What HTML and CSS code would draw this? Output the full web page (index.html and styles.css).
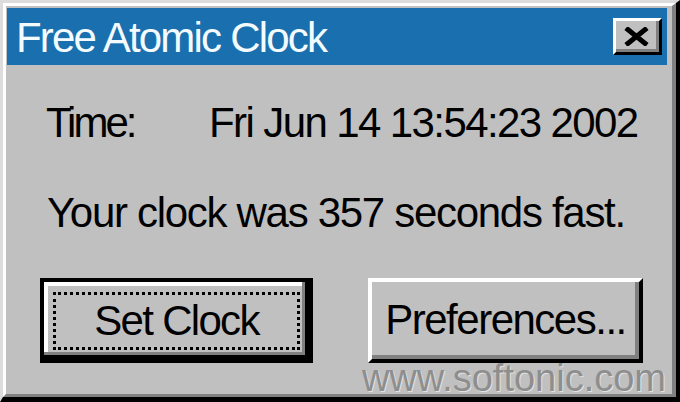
FILE: index.html
```html
<!DOCTYPE html>
<html lang="en">
<head>
<meta charset="utf-8">
<title>Free Atomic Clock</title>
<link rel="stylesheet" href="styles.css">
</head>
<body>
<div class="window">
  <div class="frame">
    <div class="titlebar">
      <span class="title">Free Atomic Clock</span>
      <button class="close" aria-label="Close">
        <svg width="25" height="19" viewBox="0 0 25 19" aria-hidden="true">
          <path d="M2 1 L23 18 M23 1 L2 18" stroke="#000" stroke-width="5" fill="none"/>
        </svg>
      </button>
    </div>
    <div class="content">
      <div class="time-row">
        <span class="label">Time:</span>
        <span class="value">Fri Jun 14 13:54:23 2002</span>
      </div>
      <p class="message">Your clock was 357 seconds fast.</p>
      <div class="buttons">
        <button class="btn btn-default"><span class="focus">Set Clock</span></button>
        <button class="btn btn-normal"><span class="caption">Preferences...</span></button>
      </div>
    </div>
  </div>
  <div class="watermark">www.softonic.com</div>
</div>
</body>
</html>
```
FILE: styles.css
```css
html, body {
  margin: 0;
  padding: 0;
  background: #c0c0c0;
}

body {
  font-family: "Liberation Sans", Arial, sans-serif;
  font-size: 42px;
  color: #000;
}

.window {
  position: relative;
  width: 680px;
  height: 402px;
  box-sizing: border-box;
  border-style: solid;
  border-width: 3px 4px 5px 3px;
  border-color: #dcdcdc #000 #000 #dcdcdc;
  background: #c0c0c0;
  overflow: hidden;
}

.frame {
  height: 100%;
  box-sizing: border-box;
  border-style: solid;
  border-width: 3px 4px 3px 3px;
  border-color: #fff #808080 #808080 #fff;
  padding: 2px 5px 0 1px;
  display: flex;
  flex-direction: column;
}

.titlebar {
  height: 57px;
  flex: none;
  background: #1a70af;
  display: flex;
  align-items: center;
  justify-content: space-between;
  padding: 0 5px 0 9px;
}

.title {
  color: #f4fbff;
  font-size: 42px;
  line-height: 42px;
  letter-spacing: -1.8px;
  margin-top: 2px;
}

.close {
  width: 49px;
  height: 37px;
  box-sizing: border-box;
  margin: 0;
  padding: 0 2px 0 0;
  border-style: solid;
  border-width: 3px;
  border-color: #fff #000 #000 #fff;
  box-shadow: inset -3px -3px 0 #808080;
  background: #c0c0c0;
  display: flex;
  align-items: center;
  justify-content: center;
}

.close svg {
  display: block;
}

.content {
  padding: 0 0 0 33px;
}

.time-row {
  margin-top: 37px;
  padding-left: 6px;
  display: flex;
  line-height: 42px;
}

.label {
  width: 163px;
  flex: none;
  letter-spacing: -3px;
}

.value {
  letter-spacing: -1.6px;
}

.message {
  margin: 48px 0 0 0;
  padding-left: 7px;
  line-height: 42px;
  letter-spacing: -1.3px;
}

.buttons {
  margin-top: 44px;
  display: flex;
  gap: 55px;
}

.btn {
  height: 85px;
  box-sizing: border-box;
  margin: 0;
  padding: 0;
  background: #c0c0c0;
  font-family: "Liberation Sans", Arial, sans-serif;
  font-size: 42px;
  line-height: 42px;
  color: #000;
  display: flex;
  align-items: center;
  justify-content: center;
}

.btn-default {
  width: 273px;
  border: 4px solid #000;
  box-shadow: inset -4px -4px 0 #000, inset -7px -7px 0 #808080, inset 4px 4px 0 #fff;
  align-items: stretch;
}

.focus {
  flex: 1;
  margin: 10px 9px 9px 9px;
  border: 3px dotted #000;
  display: flex;
  align-items: center;
  justify-content: center;
  letter-spacing: -1.7px;
}

.btn-normal {
  width: 275px;
  border-style: solid;
  border-width: 4px;
  border-color: #fff #000 #000 #fff;
  box-shadow: inset -4px -4px 0 #808080;
}

.caption {
  letter-spacing: -1.5px;
  margin-top: -2px;
}

.watermark {
  position: absolute;
  right: 10px;
  bottom: 0;
  font-size: 38px;
  line-height: 38px;
  color: #8e8e8e;
  text-shadow: 1px 1px 0 #e2e2e2;
  letter-spacing: 0;
}
```
